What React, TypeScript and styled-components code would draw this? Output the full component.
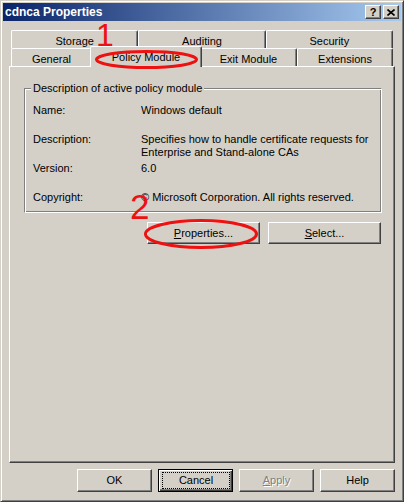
import React from 'react';
import styled, { createGlobalStyle } from 'styled-components';

const GlobalStyle = createGlobalStyle`
  body {
    margin: 0;
    background: #fff;
  }
  * {
    box-sizing: border-box;
  }
`

const Window = styled.div`
  position: relative;
  width: 404px;
  height: 502px;
  display: flex;
  flex-direction: column;
  padding: 2px;
  background: #d4d0c8;
  border: 1px solid;
  border-color: #d4d0c8 #404040 #404040 #d4d0c8;
  box-shadow: inset 1px 1px #fff, inset -1px -1px #808080;
  font-family: "Liberation Sans", Arial, sans-serif;
  font-size: 11px;
  color: #000;
`

const TitleBar = styled.div`
  height: 18px;
  display: flex;
  align-items: center;
  padding: 0 2px;
  background: linear-gradient(to right, #0a246a, #a6caf0);
`
const TitleText = styled.div`
  flex: 1;
  color: #fff;
  font-weight: bold;
  font-size: 12px;
`
const CaptionButton = styled.div`
  width: 16px;
  height: 14px;
  margin-left: 2px;
  display: flex;
  align-items: center;
  justify-content: center;
  background: #d4d0c8;
  border: 1px solid;
  border-color: #fff #404040 #404040 #fff;
  box-shadow: inset -1px -1px #808080;
  font-weight: bold;
  font-size: 11px;
  line-height: 1;
`

const Body = styled.div`
  flex: 1;
  display: flex;
  flex-direction: column;
  padding: 9px 6px 0;
`
const TabStrip = styled.div`
  padding: 0 2px;
`
const TabRow = styled.div`
  display: flex;
  height: 18px;
`
const Tab = styled.div<{ $w?: number; $active?: boolean }>`
  flex: ${({ $w }) => ($w ? `0 0 ${$w}px` : '1')};
  height: ${({ $active }) => ($active ? '21px' : '18px')};
  margin: ${({ $active }) => ($active ? '-2px -2px -1px' : '0')};
  position: relative;
  z-index: ${({ $active }) => ($active ? 2 : 1)};
  padding-top: 4px;
  text-align: center;
  line-height: 13px;
  background: #d4d0c8;
  border-top: 1px solid #fff;
  border-left: 1px solid #fff;
  border-right: 1px solid #404040;
  border-radius: 2px 2px 0 0;
  box-shadow: inset -1px 0 #808080;
  white-space: nowrap;
`

const Panel = styled.div`
  height: 397px;
  display: flex;
  flex-direction: column;
  border: 1px solid;
  border-color: #fff #404040 #404040 #fff;
  box-shadow: inset -1px -1px #808080;
`
const GroupBox = styled.div`
  display: flex;
  flex-direction: column;
  margin: 21px 12px 0 14px;
  padding: 0 8px 8px;
  border: 1px solid;
  border-color: #808080 #fff #fff #808080;
  box-shadow: inset 1px 1px #fff, inset -1px -1px #808080;
`
const Legend = styled.div`
  align-self: flex-start;
  margin: -7px 0 0 -2px;
  padding: 0 2px;
  line-height: 13px;
  background: #d4d0c8;
`
const FieldRow = styled.div<{ $mt: number }>`
  display: grid;
  grid-template-columns: 108px 1fr;
  margin-top: ${({ $mt }) => $mt}px;
  line-height: 13px;
  white-space: nowrap;
`

const ButtonRow = styled.div<{ $gap: number }>`
  display: flex;
  justify-content: flex-end;
  gap: ${({ $gap }) => $gap}px;
`
const PropsRow = styled(ButtonRow)`
  margin: 9px 13px 0 0;
`
const DialogRow = styled(ButtonRow)`
  margin-top: 6px;
`
const Button = styled.div<{ $w: number; $h: number; $default?: boolean; $disabled?: boolean }>`
  width: ${({ $w }) => $w}px;
  height: ${({ $h }) => $h}px;
  display: flex;
  background: #d4d0c8;
  border: 1px solid;
  border-color: ${({ $default }) => ($default ? '#000' : '#fff #404040 #404040 #fff')};
  box-shadow: ${({ $default }) =>
    $default
      ? 'inset 1px 1px #fff, inset -1px -1px #404040, inset -2px -2px #808080'
      : 'inset -1px -1px #808080'};
  color: ${({ $disabled }) => ($disabled ? '#808080' : '#000')};
  text-shadow: ${({ $disabled }) => ($disabled ? '1px 1px #fff' : 'none')};
`
const ButtonFace = styled.span<{ $focus?: boolean }>`
  flex: 1;
  margin: ${({ $focus }) => ($focus ? '2px 2px 2px 3px' : '3px')};
  display: flex;
  align-items: center;
  justify-content: center;
  border: 1px dotted ${({ $focus }) => ($focus ? '#000' : 'transparent')};
  line-height: 13px;
`
const Key = styled.span`
  text-decoration: underline;
`

const Numeral = styled.span<{ $x: number; $y: number; $size: number }>`
  position: absolute;
  left: ${({ $x }) => $x}px;
  top: ${({ $y }) => $y}px;
  font-size: ${({ $size }) => $size}px;
  line-height: 1;
  color: #ee1111;
  font-family: "Liberation Sans", Arial, sans-serif;
  z-index: 5;
`
const Mark = styled.svg<{ $x: number; $y: number }>`
  position: absolute;
  left: ${({ $x }) => $x}px;
  top: ${({ $y }) => $y}px;
  overflow: visible;
  z-index: 5;
`

const Ring: React.FC<{ x: number; y: number; w: number; h: number }> = ({ x, y, w, h }) => (
  <Mark $x={x} $y={y} width={w} height={h} viewBox={`0 0 ${w} ${h}`}>
    <ellipse cx={w / 2} cy={h / 2} rx={w / 2 - 1.5} ry={h / 2 - 1.5} fill="none" stroke="#ee1111" strokeWidth="3" />
  </Mark>
)

const App: React.FC = () => {
  return (
    <>
      <GlobalStyle />
      <Window>
        <TitleBar>
          <TitleText>cdnca Properties</TitleText>
          <CaptionButton>?</CaptionButton>
          <CaptionButton>
            <svg width="8" height="7" viewBox="0 0 8 7">
              <path d="M0.5 0.5 L7.5 6.5 M7.5 0.5 L0.5 6.5" stroke="#000" strokeWidth="1.6" />
            </svg>
          </CaptionButton>
        </TitleBar>
        <Body>
          <TabStrip>
            <TabRow>
              <Tab>Storage</Tab>
              <Tab>Auditing</Tab>
              <Tab>Security</Tab>
            </TabRow>
            <TabRow>
              <Tab $w={81}>General</Tab>
              <Tab $w={112} $active>Policy Module</Tab>
              <Tab $w={97}>Exit Module</Tab>
              <Tab $w={96}>Extensions</Tab>
            </TabRow>
          </TabStrip>
          <Panel>
            <GroupBox>
              <Legend>Description of active policy module</Legend>
              <FieldRow $mt={9}>
                <span>Name:</span>
                <span>Windows default</span>
              </FieldRow>
              <FieldRow $mt={16}>
                <span>Description:</span>
                <span>
                  Specifies how to handle certificate requests for
                  <br />
                  Enterprise and Stand-alone CAs
                </span>
              </FieldRow>
              <FieldRow $mt={3}>
                <span>Version:</span>
                <span>6.0</span>
              </FieldRow>
              <FieldRow $mt={16}>
                <span>Copyright:</span>
                <span>© Microsoft Corporation. All rights reserved.</span>
              </FieldRow>
            </GroupBox>
            <PropsRow $gap={8}>
              <Button $w={113} $h={22}>
                <ButtonFace><Key>P</Key>roperties...</ButtonFace>
              </Button>
              <Button $w={113} $h={22}>
                <ButtonFace><Key>S</Key>elect...</ButtonFace>
              </Button>
            </PropsRow>
          </Panel>
          <DialogRow $gap={6}>
            <Button $w={75} $h={23}>
              <ButtonFace>OK</ButtonFace>
            </Button>
            <Button $w={75} $h={23} $default>
              <ButtonFace $focus>Cancel</ButtonFace>
            </Button>
            <Button $w={75} $h={23} $disabled>
              <ButtonFace><Key>A</Key>pply</ButtonFace>
            </Button>
            <Button $w={75} $h={23}>
              <ButtonFace>Help</ButtonFace>
            </Button>
          </DialogRow>
        </Body>
        <Numeral $x={95} $y={18} $size={32}>1</Numeral>
        <Ring x={94} y={49} w={103} h={19} />
        <Numeral $x={129} $y={188} $size={35}>2</Numeral>
        <Ring x={143} y={218} w={114} h={30} />
      </Window>
    </>
  );
}

export default App;
